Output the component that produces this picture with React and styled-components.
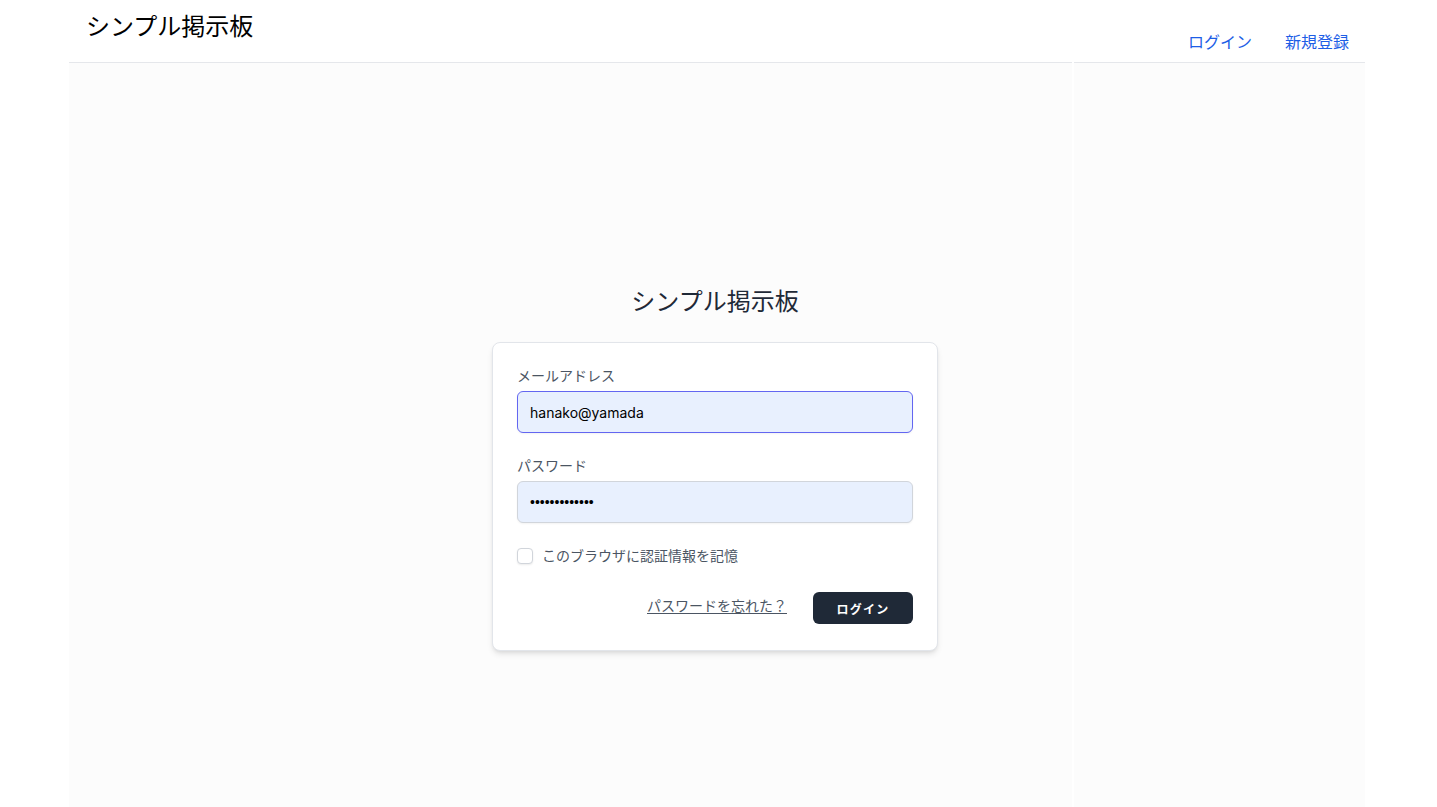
import React from "react";
import styled, { createGlobalStyle } from "styled-components";

const GlobalStyle = createGlobalStyle`
  html, body {
    margin: 0;
    padding: 0;
    background: #ffffff;
    overflow: hidden;
  }
  body {
    font-family: "Inter", "Noto Sans CJK JP", sans-serif;
    color: #111827;
  }
  * {
    box-sizing: border-box;
  }
`;

const Shell = styled.div`
  width: 1296px;
  margin: 0 72px 0 69px;
  display: grid;
  grid-template-columns: 1003px 291px;
  grid-template-rows: 63px calc(100vh - 63px);
  column-gap: 2px;
`;

const HeaderCell = styled.header`
  border-bottom: 1px solid #e5e7eb;
  display: flex;
  align-items: flex-start;
  justify-content: ${(p) => (p.$right ? "flex-end" : "flex-start")};
  padding: ${(p) => (p.$right ? "30px 16px 0 0" : "11px 0 0 17px")};
  gap: 33px;
`;

const SiteTitle = styled.h1`
  margin: 0;
  font-size: 24px;
  font-weight: 400;
  line-height: 32px;
  color: #000000;
`;

const NavLink = styled.a`
  font-size: 16px;
  line-height: 24px;
  color: #1d5ee6;
  text-decoration: none;
  cursor: pointer;
`;

const Panel = styled.div`
  grid-row: 2;
  grid-column: ${(p) => p.$col};
  background: #fcfcfc;
`;

const LoginArea = styled.main`
  grid-row: 2;
  grid-column: 1 / -1;
  display: flex;
  flex-direction: column;
  align-items: center;
  padding: 223px 4px 0 0;
  z-index: 1;
`;

const FormTitle = styled.h2`
  margin: 0 0 24px;
  font-size: 24px;
  font-weight: 400;
  line-height: 32px;
  color: #1f2937;
`;

const Card = styled.form`
  width: 446px;
  background: #ffffff;
  border: 1px solid #e2e5ea;
  border-radius: 8px;
  box-shadow: 0 4px 6px -1px rgba(0, 0, 0, 0.1), 0 2px 4px -2px rgba(0, 0, 0, 0.1);
  padding: 23px 24px 26px;
`;

const Field = styled.div`
  margin-top: ${(p) => (p.$first ? "0" : "23px")};
`;

const Label = styled.label`
  display: block;
  font-size: 14px;
  line-height: 20px;
  color: #4b5563;
`;

const Input = styled.input`
  display: block;
  width: 100%;
  height: 42px;
  margin-top: 5px;
  padding: 0 12px;
  font-family: ${(p) =>
    p.type === "password" ? '"Liberation Sans", sans-serif' : '"Inter", "Noto Sans CJK JP", sans-serif'};
  font-size: 14px;
  color: #000000;
  background: #e8f0fe;
  border: 1px solid ${(p) => (p.$focused ? "#6366f1" : "#d1d5db")};
  border-radius: 6px;
  box-shadow: 0 1px 2px rgba(0, 0, 0, 0.05);
  outline: none;
`;

const CheckRow = styled.label`
  display: flex;
  align-items: center;
  margin-top: 23px;
  font-size: 14px;
  line-height: 20px;
  color: #4b5563;
`;

const Checkbox = styled.input`
  appearance: none;
  width: 16px;
  height: 16px;
  margin: 0 9px 0 0;
  border: 1px solid #d1d5db;
  border-radius: 4px;
  background: #ffffff;
  box-shadow: 0 1px 2px rgba(0, 0, 0, 0.08);
`;

const Actions = styled.div`
  display: flex;
  align-items: center;
  justify-content: flex-end;
  margin-top: 26px;
`;

const ForgotLink = styled.a`
  font-size: 14px;
  line-height: 20px;
  color: #4b5563;
  text-decoration: underline;
  text-underline-offset: 2px;
  cursor: pointer;
  margin-top: -4px;
`;

const SubmitButton = styled.button`
  width: 100px;
  height: 32px;
  margin-left: 26px;
  padding: 0;
  background: #1f2937;
  color: #ffffff;
  border: 1px solid transparent;
  border-radius: 6px;
  font-family: "Inter", "Noto Sans CJK JP", sans-serif;
  font-size: 12px;
  font-weight: 700;
  letter-spacing: 0.1em;
  cursor: pointer;
`;

export default function App() {
  return (
    <>
      <GlobalStyle />
      <Shell>
        <HeaderCell>
          <SiteTitle>シンプル掲示板</SiteTitle>
        </HeaderCell>
        <HeaderCell $right>
          <NavLink>ログイン</NavLink>
          <NavLink>新規登録</NavLink>
        </HeaderCell>
        <Panel $col={1} />
        <Panel $col={2} />
        <LoginArea>
          <FormTitle>シンプル掲示板</FormTitle>
          <Card onSubmit={(e) => e.preventDefault()}>
            <Field $first>
              <Label htmlFor="email">メールアドレス</Label>
              <Input id="email" type="email" defaultValue="hanako@yamada" $focused />
            </Field>
            <Field>
              <Label htmlFor="password">パスワード</Label>
              <Input id="password" type="password" defaultValue="hanakoyamada1" />
            </Field>
            <CheckRow>
              <Checkbox type="checkbox" />
              このブラウザに認証情報を記憶
            </CheckRow>
            <Actions>
              <ForgotLink>パスワードを忘れた？</ForgotLink>
              <SubmitButton type="submit">ログイン</SubmitButton>
            </Actions>
          </Card>
        </LoginArea>
      </Shell>
    </>
  );
}
